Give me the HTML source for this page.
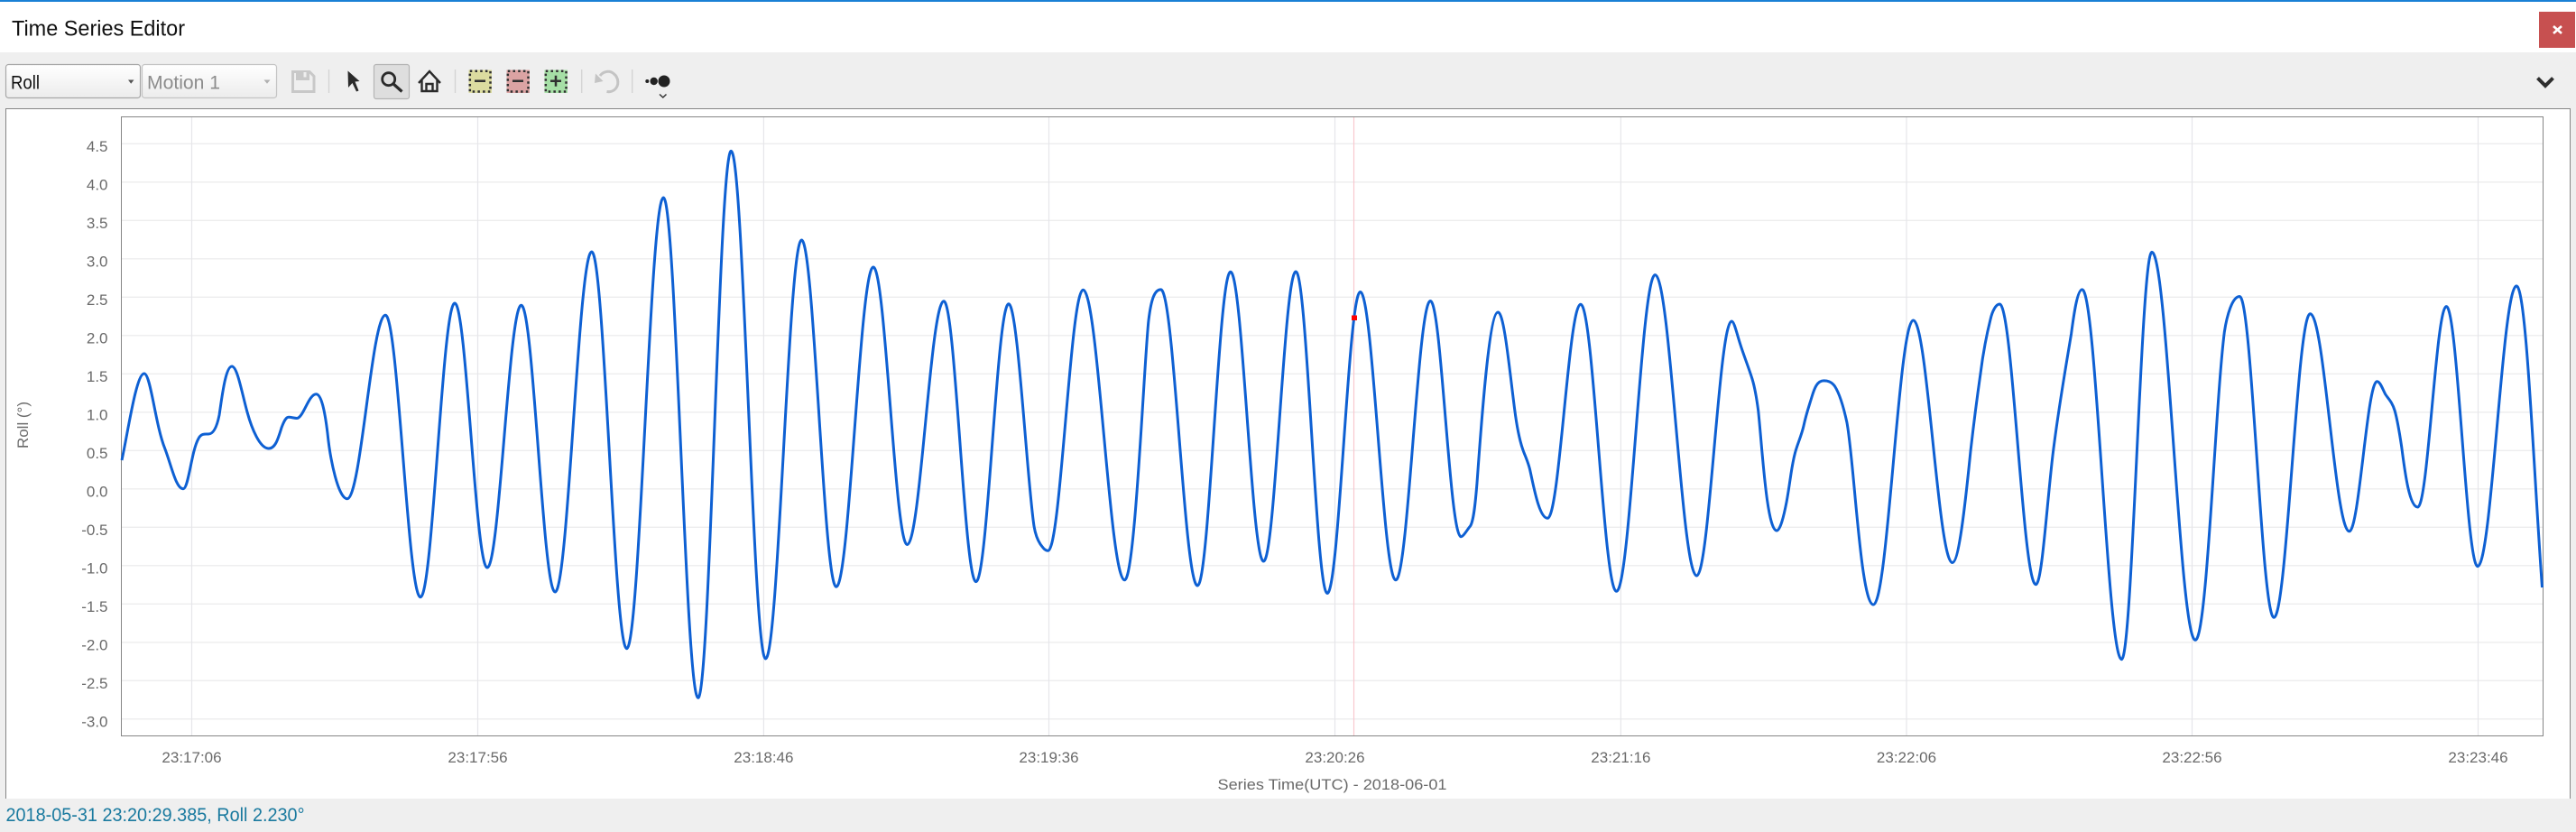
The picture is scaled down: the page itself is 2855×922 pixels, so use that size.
<!DOCTYPE html>
<html lang="en"><head><meta charset="utf-8"><title>Time Series Editor</title>
<style>
html,body{margin:0;padding:0;width:2855px;height:922px;overflow:hidden;background:#fff}
svg{position:absolute;left:0;top:0;display:block}
text{font-family:"Liberation Sans",sans-serif}
.y{font-size:17px;fill:#6a6a6a;text-anchor:end}
.x{font-size:17px;fill:#6a6a6a;text-anchor:middle}
</style></head><body>
<svg width="2855" height="922" viewBox="0 0 2855 922" xmlns="http://www.w3.org/2000/svg">
<defs>
<linearGradient id="dd" x1="0" y1="0" x2="0" y2="1"><stop offset="0" stop-color="#ffffff"/><stop offset="1" stop-color="#ececec"/></linearGradient>
</defs>
<rect width="2855" height="922" fill="#fff"/>
<rect width="2855" height="2" fill="#1a80d5"/>
<text x="13" y="39.5" font-size="24" fill="#111" textLength="192" lengthAdjust="spacingAndGlyphs">Time Series Editor</text>
<rect x="2814" y="13" width="40" height="40" fill="#c75050"/>
<path d="M2830 29L2839 37M2839 29L2830 37" stroke="#fff" stroke-width="2.6"/>
<!-- toolbar -->
<rect x="0" y="58" width="2855" height="864" fill="#efefef"/>
<rect x="6.5" y="71.5" width="149" height="37" rx="3" fill="url(#dd)" stroke="#a8a8a8" stroke-width="1.2"/>
<text x="12" y="98.7" font-size="21" fill="#111" textLength="32" lengthAdjust="spacingAndGlyphs">Roll</text>
<path d="M142 88.5H148.5L145.2 92.8Z" fill="#555"/>
<rect x="157.5" y="71.5" width="149" height="37" rx="3" fill="url(#dd)" stroke="#c4c4c4" stroke-width="1.2"/>
<text x="163" y="98.7" font-size="21" fill="#8c8c8c" textLength="81" lengthAdjust="spacingAndGlyphs">Motion 1</text>
<path d="M292.5 88.5H299.5L296 92.8Z" fill="#b0b0b0"/>
<path d="M324.5 79.5H343L348 84.5V101.5H324.5Z" fill="none" stroke="#c8c8c8" stroke-width="3"/>
<path d="M328 79H343V89H328Z" fill="#c8c8c8"/><rect x="336.5" y="80" width="3" height="5.5" fill="#efefef"/>
<g fill="#d4d4d4"><rect x="363.8" y="77" width="1.4" height="26"/><rect x="503.8" y="77" width="1.4" height="26"/><rect x="644" y="77" width="1.4" height="26"/><rect x="700" y="77" width="1.4" height="26"/></g>
<path d="M385.5 78.5L398.5 90L393.5 90.5L397.5 100.5L395 101.5L390.5 92L386 97Z" fill="#2a2a2a"/>
<rect x="414.5" y="71.5" width="39" height="38" rx="2.5" fill="#dedede" stroke="#b5b5b5" stroke-width="1.2"/>
<circle cx="430.7" cy="87.7" r="7" fill="none" stroke="#2a2a2a" stroke-width="2.8"/>
<path d="M436 93L445.5 101.5" stroke="#2a2a2a" stroke-width="3.2"/>
<path d="M464 92L476 79L488 92" fill="none" stroke="#2a2a2a" stroke-width="2.4"/>
<path d="M467.5 89V101H484.5V89M472.5 101V93H479.5V101" fill="none" stroke="#2a2a2a" stroke-width="2.4"/>
<rect x="519.5" y="77.5" width="25.5" height="25.5" fill="#dcdca0"/>
<rect x="561.5" y="77.5" width="25.5" height="25.5" fill="#dba3a3"/>
<rect x="603.5" y="77.5" width="25.5" height="25.5" fill="#a6dfa6"/>
<g fill="none" stroke="#303030" stroke-width="2.5" stroke-dasharray="2.5 3.2">
<rect x="520.8" y="78.8" width="22.7" height="22.7"/>
<rect x="562.8" y="78.8" width="22.7" height="22.7"/>
<rect x="604.8" y="78.8" width="22.7" height="22.7"/>
</g>
<path d="M526 89.8H538M568 89.8H580M610 89.8H622M616 83.8V95.8" stroke="#303030" stroke-width="2.5"/>
<path d="M665 84C669 78.5 676 78 680 81.5C686 86 686.5 95 681 99.5C678.5 101.5 675.5 102 672.5 101.5" fill="none" stroke="#c4c4c4" stroke-width="3"/>
<path d="M659 92L660 81.5L668.5 90Z" fill="#c4c4c4"/>
<g fill="#222"><circle cx="717.3" cy="90" r="2"/><circle cx="724.7" cy="90" r="4.2"/><circle cx="736" cy="90" r="6.5"/></g>
<path d="M731 104.5L734.8 108L738.5 104.5" fill="none" stroke="#333" stroke-width="1.5"/>
<path d="M2812.5 86.5L2821 95L2829.5 86.5" fill="none" stroke="#2e2e2e" stroke-width="4"/>
<!-- chart area -->
<rect x="6" y="120" width="2842.5" height="765" fill="#fff"/>
<path d="M6.5 885V120.5H2848.5V885" fill="none" stroke="#868686" stroke-width="1"/>
<g stroke="#ededee" stroke-width="1.4">
<path d="M135 159.3H2818M135 201.8H2818M135 244.3H2818M135 286.8H2818M135 329.3H2818M135 371.8H2818M135 414.3H2818M135 456.8H2818M135 499.3H2818M135 541.8H2818M135 584.3H2818M135 626.8H2818M135 669.3H2818M135 711.8H2818M135 754.3H2818M135 796.8H2818"/>
</g>
<g stroke="#e6e6ea" stroke-width="1.2">
<path d="M212.5 130V815M529.5 130V815M846.4 130V815M1162.5 130V815M1479.5 130V815M1796.4 130V815M2113 130V815M2429.5 130V815M2746.5 130V815"/>
</g>
<path d="M1500.5 130V815" stroke="#f9c8cf" stroke-width="1.2"/>
<rect x="134.5" y="129.5" width="2684" height="686" fill="none" stroke="#868686" stroke-width="1"/>
<path fill="none" stroke="#0e60d3" stroke-width="3" stroke-linejoin="round" d="M135 510C142 478 151 414 159.8 414C167 414 172 470 182.6 496.7C190 516 195 541.7 203 541.7C209 541.7 212 500 220 486C223 480 228 481 231 481C236 481 240 475 243 460C246 440 250 406 257 406C263 406 268 435 274 456.7C279 475 288 497 297.8 497C305 497 308 487 312 474C315 466 317 462.3 320 462.3C323 462.3 326 463.5 329 463.5C336 463.5 342 436.7 350.4 436.7C356 436.7 360 455 363 480C366 510 375 552.7 384.8 552.7C400.1 552.7 412 349.3 427.2 349.3C441.2 349.3 452 661.7 466 661.7C479.7 661.7 490.3 336 504 336C517 336 527 629 540 629C553.6 629 564.1 338.3 577.7 338.3C591.2 338.3 601.7 656 615.2 656C629.8 656 641.2 279 655.8 279C669.8 279 680.6 718.7 694.6 718.7C709.3 718.7 720.6 219 735.3 219C749.1 219 759.9 773.3 773.7 773.3C786.9 773.3 797.1 167.4 810.3 167.4C824.1 167.4 834.7 730 848.5 730C862.9 730 874 266 888.4 266C902.2 266 913 650.2 926.8 650.2C941.6 650.2 953.1 296 967.9 296C981.4 296 991.9 603.5 1005.4 603.5C1020 603.5 1031.4 333.8 1046 333.8C1058.9 333.8 1068.8 644.6 1081.7 644.6C1094.7 644.6 1104.9 336.8 1117.9 336.8C1128 336.8 1138 530 1146 583C1148 595 1151 600 1153 603C1156 607 1158 610.2 1161.6 610.2C1175.6 610.2 1186.4 321.3 1200.4 321.3C1217 321.3 1229.8 642.8 1246.4 642.8C1258 642.8 1268 400 1273 355C1276 330 1280 320.9 1286.6 320.9C1301.2 320.9 1312.6 649 1327.2 649C1340.4 649 1350.6 301.3 1363.8 301.3C1377 301.3 1387.2 622 1400.4 622C1413.3 622 1423.3 301 1436.2 301C1448.7 301 1458.5 657.5 1471 657.5C1484.2 657.5 1494.4 323.5 1507.6 323.5C1521.7 323.5 1532.8 642.8 1546.9 642.8C1560.7 642.8 1571.5 333.5 1585.3 333.5C1597.5 333.5 1606.5 594.7 1619.2 594.7C1622 594.7 1626 587 1629.5 583C1633 578 1635 560 1637 535C1641 480 1650 346 1660.3 346C1667 346 1673 410 1678.6 453C1681 472 1684 487 1687.5 497.4C1690 505 1693 510 1695.5 520C1700 540 1706 574.3 1715.2 574.3C1728.4 574.3 1738.6 337.2 1751.8 337.2C1766.1 337.2 1777.2 655.3 1791.5 655.3C1806.9 655.3 1819 304.6 1834.4 304.6C1851 304.6 1863.8 638 1880.4 638C1894.4 638 1905.2 356 1919.2 356C1922 356 1925 370 1928.6 381C1933 395 1938 407 1942 420C1945 430 1947 442 1948.7 455C1953 495 1958 588 1969.2 588C1973 588 1977 572 1980 556.5C1984 535 1985 520 1988.8 504.8C1991 494 1996 485 1999 472C2002 458 2005 450 2008 440C2011 430 2014 421.9 2021.4 421.9C2026 421.9 2030 423 2033.5 428C2038 435 2043 450 2046.9 468C2055 510 2062 670 2076.3 670C2092.3 670 2104.5 355 2120.5 355C2136.1 355 2148.2 623.5 2163.8 623.5C2171 623.5 2178 560 2184 500C2188 465 2192 435 2195 414C2198 390 2202 370 2206 354C2208 345 2212 337 2216.2 337C2230.6 337 2241.9 647.7 2256.3 647.7C2263 647.7 2268 565 2275 505C2281 455 2289 410 2295.6 370C2298 352 2302 320.9 2307.7 320.9C2323.4 320.9 2335.7 730.7 2351.4 730.7C2363.4 730.7 2372.9 279.4 2384.9 279.4C2402.3 279.4 2415.7 709.3 2433.1 709.3C2446 709.3 2455 450 2465.3 368C2468 350 2474 328.5 2482.2 328.5C2495.9 328.5 2506.5 684.3 2520.2 684.3C2534.7 684.3 2545.9 347.7 2560.4 347.7C2576 347.7 2588.1 588.8 2603.7 588.8C2614.7 588.8 2623.5 422.7 2634.5 422.7C2638 422.7 2641 432 2643.8 437C2647 442 2651 445 2654.1 455C2657 465 2659 477 2661.7 495C2665 520 2670 562 2679.6 562C2691 562 2699.9 339.6 2711.3 339.6C2723.8 339.6 2733.5 627.6 2746 627.6C2761.5 627.6 2773.5 316.9 2789 316.9C2800 316.9 2808 520 2817.5 651"/>
<rect x="1498" y="349.5" width="6" height="5.5" fill="#f00"/>
<!-- y labels -->
<g class="y">
<text class="y" x="119.5" y="168">4.5</text><text class="y" x="119.5" y="210.5">4.0</text><text class="y" x="119.5" y="253">3.5</text><text class="y" x="119.5" y="295.5">3.0</text><text class="y" x="119.5" y="338">2.5</text><text class="y" x="119.5" y="380.5">2.0</text><text class="y" x="119.5" y="423">1.5</text><text class="y" x="119.5" y="465.5">1.0</text><text class="y" x="119.5" y="508">0.5</text><text class="y" x="119.5" y="550.5">0.0</text><text class="y" x="119.5" y="593">-0.5</text><text class="y" x="119.5" y="635.5">-1.0</text><text class="y" x="119.5" y="678">-1.5</text><text class="y" x="119.5" y="720.5">-2.0</text><text class="y" x="119.5" y="763">-2.5</text><text class="y" x="119.5" y="805.5">-3.0</text>
</g>
<text class="x" x="212.5" y="845">23:17:06</text><text class="x" x="529.5" y="845">23:17:56</text><text class="x" x="846.4" y="845">23:18:46</text><text class="x" x="1162.5" y="845">23:19:36</text><text class="x" x="1479.5" y="845">23:20:26</text><text class="x" x="1796.4" y="845">23:21:16</text><text class="x" x="2113" y="845">23:22:06</text><text class="x" x="2429.5" y="845">23:22:56</text><text class="x" x="2746.5" y="845">23:23:46</text>
<text x="1349.5" y="875" font-size="17" fill="#6a6a6a" textLength="254" lengthAdjust="spacingAndGlyphs">Series Time(UTC) - 2018-06-01</text>
<text transform="translate(31 497) rotate(-90)" font-size="17" fill="#6a6a6a" textLength="52" lengthAdjust="spacingAndGlyphs">Roll (°)</text>
<text x="6.5" y="910" font-size="21" fill="#1a7a9f" textLength="331" lengthAdjust="spacingAndGlyphs">2018-05-31 23:20:29.385, Roll 2.230°</text>
</svg>
</body></html>
